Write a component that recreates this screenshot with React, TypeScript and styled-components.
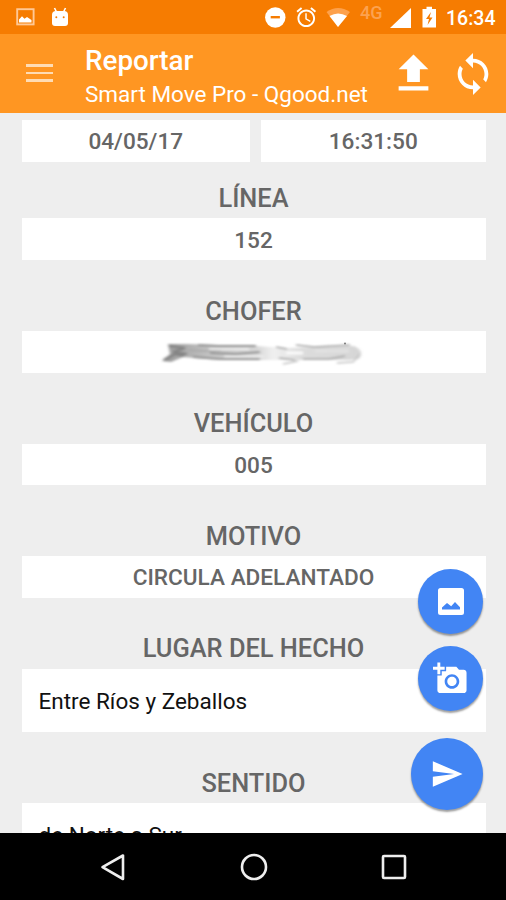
import React from "react";
import styled, { createGlobalStyle } from "styled-components";

const GlobalStyle = createGlobalStyle`
  * { box-sizing: border-box; }
  body { margin: 0; font-family: Roboto, "Liberation Sans", sans-serif; }
`;

const Screen = styled.div`
  position: relative;
  display: flex;
  flex-direction: column;
  width: 506px;
  height: 900px;
  overflow: hidden;
  background: #eeeeee;
`;

const StatusBar = styled.header`
  display: flex;
  flex: 0 0 34px;
  align-items: center;
  justify-content: space-between;
  padding: 0 10px 0 16px;
  background: #f67c01;
  color: #fff;
`;

const StatusGroup = styled.div<{ $gap: number }>`
  display: flex;
  align-items: center;
  gap: ${(p) => p.$gap}px;
  height: 34px;
`;

const Clock = styled.span`
  margin-top: 3px;
  width: 50px;
  font-size: 19.5px;
  line-height: 24px;
  font-weight: 500;
  white-space: nowrap;
`;

const AppBar = styled.nav`
  display: flex;
  flex: 0 0 79px;
  align-items: center;
  padding: 0 10px 0 26px;
  background: #ff9622;
  color: #fff;
`;

const MenuButton = styled.button`
  display: flex;
  flex-direction: column;
  justify-content: space-between;
  width: 27px;
  height: 18px;
  margin-bottom: 1px;
  padding: 0;
  border: 0;
  background: none;
`;

const MenuLine = styled.span`
  height: 2.6px;
  background: #ffdcb4;
`;

const Titles = styled.div`
  flex: 1;
  margin-left: 32px;
  padding-top: 7px;
  white-space: nowrap;
`;

const Title = styled.h1`
  margin: 0;
  font-size: 27.8px;
  line-height: 34px;
  font-weight: 500;
`;

const Subtitle = styled.p`
  margin: 0;
  font-size: 22.5px;
  line-height: 32px;
`;

const Actions = styled.div`
  display: flex;
  align-items: center;
  gap: 11px;
`;

const Form = styled.main`
  flex: 1;
  min-height: 0;
  overflow: hidden;
  padding: 7px 20.5px 0 21.5px;
`;

const DateRow = styled.div`
  display: grid;
  grid-template-columns: 228.5px 1fr;
  gap: 11px;
`;

const Value = styled.div`
  display: flex;
  align-items: center;
  justify-content: center;
  height: 41.7px;
  padding-top: 2px;
  background: #fff;
  color: #666;
  font-size: 22.6px;
  font-weight: 500;
`;

const Field = styled.section<{ $gap?: number }>`
  margin-top: ${(p) => p.$gap ?? 14.1}px;
`;

const Label = styled.h2`
  display: flex;
  align-items: center;
  justify-content: center;
  height: 56.75px;
  margin: 0;
  padding-top: 16.6px;
  color: #666;
  font-size: 25.4px;
  font-weight: 500;
`;

const Note = styled.div`
  height: 63.9px;
  padding: 0 17px;
  background: #fff;
  color: #111;
  font-size: 22.5px;
  line-height: 64.6px;
`;

const FabStack = styled.div`
  position: absolute;
  right: 23px;
  bottom: 90px;
  display: flex;
  flex-direction: column;
  align-items: flex-end;
`;

const Fab = styled.button<{ $size: number; $below: number }>`
  display: flex;
  align-items: center;
  justify-content: center;
  width: ${(p) => p.$size}px;
  height: ${(p) => p.$size}px;
  margin: 0 0 ${(p) => p.$below}px;
  padding: 0;
  border: 0;
  border-radius: 50%;
  background: #4285f4;
  color: #fff;
  box-shadow: 0 2px 2px rgba(0, 0, 0, 0.38);
`;

const SystemNav = styled.footer`
  display: flex;
  flex: 0 0 67px;
  align-items: center;
  justify-content: space-between;
  padding: 0 98px 0 99px;
  background: #000;
`;

const ScribbleDrawing = styled.svg`
  margin: 2px 0 0 16px;
`;

const Icon = ({ size, d }: { size: number; d: string }) => (
  <svg width={size} height={size} viewBox="0 0 24 24" fill="currentColor">
    <path d={d} />
  </svg>
);

const UPLOAD = "M9 16h6v-6h4l-7-7-7 7h4zm-4 2h14v2H5z";
const SYNC =
  "M12 4V1L8 5l4 4V6c3.31 0 6 2.69 6 6 0 1.01-.25 1.97-.7 2.8l1.46 1.46C19.54 15.03 20 13.57 20 12c0-4.42-3.58-8-8-8zm0 14c-3.31 0-6-2.69-6-6 0-1.01.25-1.97.7-2.8L5.24 7.74C4.46 8.97 4 10.43 4 12c0 4.42 3.58 8 8 8v3l4-4-4-4v3z";
const CAMERA =
  "M3 4V1h2v3h3v2H5v3H3V6H0V4h3zm3 6V7h3V4h7l1.83 2H21c1.1 0 2 .9 2 2v12c0 1.1-.9 2-2 2H5c-1.1 0-2-.9-2-2V10h3zm7 9c2.76 0 5-2.24 5-5s-2.24-5-5-5-5 2.24-5 5 2.24 5 5 5zm-3.2-5c0 1.77 1.43 3.2 3.2 3.2s3.2-1.43 3.2-3.2-1.43-3.2-3.2-3.2-3.2 1.43-3.2 3.2z";
const SEND = "M2.01 21L23 12 2.01 3 2 10l15 2-15 2z";
const ALARM =
  "M22 5.72l-4.6-3.86-1.29 1.53 4.6 3.86L22 5.72zM7.88 3.39L6.6 1.86 2 5.71l1.29 1.53 4.59-3.85zM12.5 8H11v6l4.75 2.85.75-1.23-4-2.37V8zM12 4c-4.97 0-9 4.03-9 9s4.02 9 9 9c4.97 0 9-4.03 9-9s-4.03-9-9-9zm0 16c-3.87 0-7-3.13-7-7s3.13-7 7-7 7 3.13 7 7-3.13 7-7 7z";

const PictureNotice = () => (
  <svg width="19" height="18" viewBox="0 0 19 18">
    <rect x="1.2" y="1.2" width="16.4" height="15.2" fill="none" stroke="#ffc896" strokeWidth="1.9" />
    <path d="M3 14.5V11.5l3-3.2 2.5 2.5 2.5-1.8 4.5 3v2.5z" fill="#fff" />
  </svg>
);

const RobotNotice = () => (
  <svg width="18" height="20" viewBox="0 0 18 20">
    <path d="M3.5 1l2 4M14.5 1l-2 4" stroke="#fff" strokeWidth="1.6" />
    <path d="M1 8q0-4 4-4h8q4 0 4 4v8q0 3-3 3H4q-3 0-3-3z" fill="#fff" />
    <circle cx="5.3" cy="10.3" r="1" fill="#f67c01" />
    <circle cx="12.7" cy="10.3" r="1" fill="#f67c01" />
  </svg>
);

const ScribbledName = () => (
  <ScribbleDrawing width="206" height="30" viewBox="0 0 206 30">
    <defs>
      <filter id="smudge" x="-5%" y="-20%" width="110%" height="140%">
        <feGaussianBlur stdDeviation="1.8 0.9" />
      </filter>
      <linearGradient id="ink" x1="0" x2="1">
        <stop offset="0" stopColor="#999" />
        <stop offset=".25" stopColor="#c4c4c4" />
        <stop offset=".48" stopColor="#d8d8d8" />
        <stop offset=".56" stopColor="#f0f0f0" />
        <stop offset=".7" stopColor="#dcdcdc" />
        <stop offset="1" stopColor="#d6d6d6" />
      </linearGradient>
    </defs>
    <g filter="url(#smudge)" fill="none">
      <path d="M3 22L11 15 9 5 28 5 96 7 128 9 195 7Q206 12 200 20L190 21 120 21 60 21 24 18 12 23z" fill="url(#ink)" />
      <path d="M10 7L26 9 14 13 28 15M5 21L16 15 25 17" stroke="#858585" strokeWidth="2.6" />
      <path d="M39 6L58 7 97 7M51 14L77 15 101 13M34 18L61 20 101 20" stroke="#929292" strokeWidth="1.8" />
      <path d="M30 11L46 12 62 11" stroke="#a8a8a8" strokeWidth="1.6" />
      <path d="M50 10H90M65 17.5H105" stroke="#eee" strokeWidth="2" />
      <path d="M117 8L128 10M120 19L136 21M137 6L155 8 191 6M144 20L170 20 186 17" stroke="#a6a6a6" strokeWidth="1.6" />
      <path d="M127 14H144" stroke="#fafafa" strokeWidth="3" />
      <path d="M156 12H190" stroke="#e2e2e2" strokeWidth="3" />
      <path d="M124 25L139 22M178 24L194 23 201 15" stroke="#c4c4c4" strokeWidth="1.5" />
    </g>
    <circle cx="186" cy="4.5" r="1" fill="#777" />
  </ScribbleDrawing>
);

export default function App() {
  return (
    <Screen>
      <GlobalStyle />
      <StatusBar>
        <StatusGroup $gap={16}>
          <PictureNotice />
          <RobotNotice />
        </StatusGroup>
        <StatusGroup $gap={0}>
          <svg width="182" height="34" viewBox="264 0 182 34">
            <circle cx="275.3" cy="17.5" r="10.2" fill="#fff" />
            <path d="M270.7 17.2h9.2" stroke="#f67c01" strokeWidth="2.4" />
            <g transform="translate(294.5 5.5) scale(.98)" fill="#fff"><path d={ALARM} /></g>
            <path d="M326.5 12Q338 4 350 12L338 27z" fill="#fda14c" />
            <path d="M329.5 16Q338 11 347 16L338 27z" fill="#fff" />
            <text x="360" y="18.5" fontSize="18" fontWeight="500" fill="#fca250">4G</text>
            <path d="M411 8V28H390z" fill="#fff" />
            <path d="M422.5 9h4V6.7h5.5V9h4v18.5h-13.5z" fill="#fff" />
            <path d="M431 12l-5 7h3l-1.5 6 5-7.5h-3z" fill="#f67c01" />
          </svg>
          <Clock>16:34</Clock>
        </StatusGroup>
      </StatusBar>
      <AppBar>
        <MenuButton aria-label="Menú"><MenuLine /><MenuLine /><MenuLine /></MenuButton>
        <Titles>
          <Title>Reportar</Title>
          <Subtitle>Smart Move Pro - Qgood.net</Subtitle>
        </Titles>
        <Actions>
          <Icon size={51} d={UPLOAD} />
          <Icon size={46} d={SYNC} />
        </Actions>
      </AppBar>
      <Form>
        <DateRow>
          <Value>04/05/17</Value>
          <Value>16:31:50</Value>
        </DateRow>
        <Field $gap={0}><Label>LÍNEA</Label><Value>152</Value></Field>
        <Field><Label>CHOFER</Label><Value><ScribbledName /></Value></Field>
        <Field><Label>VEHÍCULO</Label><Value>005</Value></Field>
        <Field><Label>MOTIVO</Label><Value>CIRCULA ADELANTADO</Value></Field>
        <Field><Label>LUGAR DEL HECHO</Label><Note>Entre Ríos y Zeballos</Note></Field>
        <Field><Label>SENTIDO</Label><Note>de Norte a Sur</Note></Field>
      </Form>
      <FabStack>
        <Fab $size={65} $below={12} aria-label="Galería">
          <svg width="26" height="27" viewBox="0 0 26 27">
            <path fillRule="evenodd" fill="currentColor" d="M2.5 0h21q2.5 0 2.5 2.5v22q0 2.5-2.5 2.5h-21q-2.5 0-2.5-2.5v-22q0-2.5 2.5-2.5zM4 21.5h18v-2.2L17 14l-3.8 4.2-4.2-3.2-5 4.6z" />
          </svg>
        </Fab>
        <Fab $size={65} $below={27} aria-label="Cámara"><Icon size={35} d={CAMERA} /></Fab>
        <Fab $size={72} $below={0} aria-label="Enviar"><Icon size={34} d={SEND} /></Fab>
      </FabStack>
      <SystemNav>
        <svg width="28" height="30" viewBox="0 0 28 30"><path d="M24 3.5V27L3.5 15.2z" fill="none" stroke="#eee" strokeWidth="2.6" strokeLinejoin="round" /></svg>
        <svg width="30" height="30" viewBox="0 0 30 30"><circle cx="15" cy="15" r="12" fill="none" stroke="#eee" strokeWidth="2.6" /></svg>
        <svg width="28" height="28" viewBox="0 0 28 28"><rect x="3" y="3" width="22" height="22" rx="1" fill="none" stroke="#eee" strokeWidth="2.6" /></svg>
      </SystemNav>
    </Screen>
  );
}
